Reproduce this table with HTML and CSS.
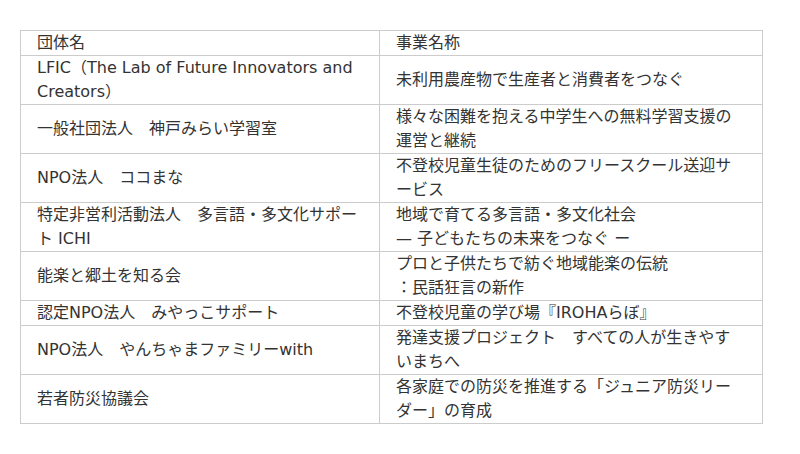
FILE: index.html
```html
<!DOCTYPE html>
<html lang="ja">
<head>
<meta charset="utf-8">
<link rel="stylesheet" href="styles.css">
</head>
<body>
<table class="grid">
  <colgroup><col class="c1"><col class="c2"></colgroup>
  <tr><td>団体名</td><td>事業名称</td></tr>
  <tr><td>LFIC（The Lab of Future Innovators and Creators）</td><td>未利用農産物で生産者と消費者をつなぐ</td></tr>
  <tr><td>一般社団法人　神戸みらい学習室</td><td>様々な困難を抱える中学生への無料学習支援の運営と継続</td></tr>
  <tr><td>NPO法人　ココまな</td><td>不登校児童生徒のためのフリースクール送迎サービス</td></tr>
  <tr><td>特定非営利活動法人　多言語・多文化サポート ICHI</td><td>地域で育てる多言語・多文化社会<br>— 子どもたちの未来をつなぐ ー</td></tr>
  <tr><td>能楽と郷土を知る会</td><td>プロと子供たちで紡ぐ地域能楽の伝統<br>：民話狂言の新作</td></tr>
  <tr><td>認定NPO法人　みやっこサポート</td><td>不登校児童の学び場『IROHAらぼ』</td></tr>
  <tr><td>NPO法人　やんちゃまファミリーwith</td><td>発達支援プロジェクト　すべての人が生きやすいまちへ</td></tr>
  <tr><td>若者防災協議会</td><td>各家庭での防災を推進する「ジュニア防災リーダー」の育成</td></tr>
</table>
</body>
</html>
```
FILE: styles.css
```css
html, body { margin: 0; background: #fff; }
body { padding: 30px 20px; }
.grid {
  border-collapse: collapse;
  width: 742px;
  table-layout: fixed;
  font-family: "DejaVu Sans", "Noto Sans CJK JP", sans-serif;
  font-size: 16px;
  line-height: 24px;
  color: #333;
}
.c1 { width: 359px; }
.c2 { width: 383px; }
.grid td {
  border: 1px solid #ccc;
  padding: 0 16px;
  vertical-align: middle;
}
```
